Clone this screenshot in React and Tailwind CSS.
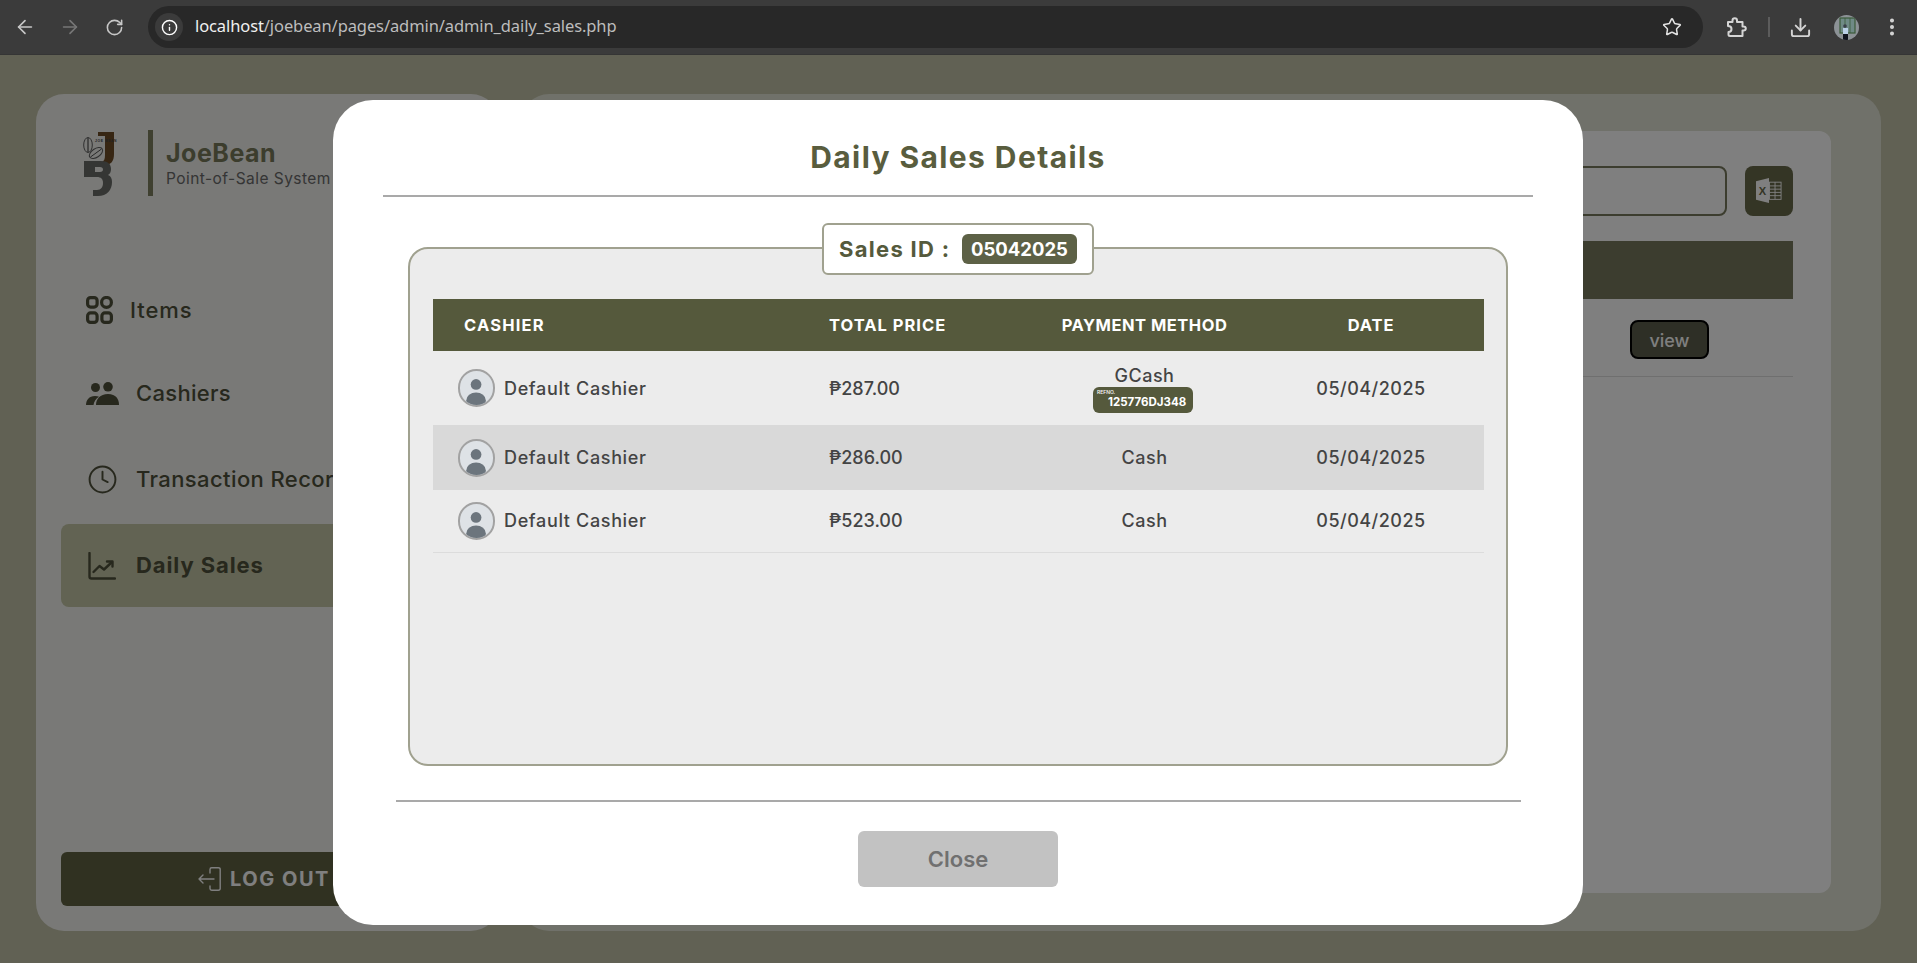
import { ArrowLeft, ArrowRight, RotateCw, Info, Star, Download, EllipsisVertical, Clock } from 'lucide-react';

const sales = [
  { id: 1, price: '₱287.00', method: 'GCash', ref: '125776DJ348', row: 'h-[74px]' },
  { id: 2, price: '₱286.00', method: 'Cash', row: 'h-[65px] bg-[#d9d9d9]' },
  { id: 3, price: '₱523.00', method: 'Cash', row: 'h-[62px] border-b border-[#dcdcdc]' },
];

function ItemsIcon() {
  return (
    <svg width="27" height="28" viewBox="0 0 27 28" fill="none" stroke="currentColor" strokeWidth="3.2">
      <rect x="1.6" y="1.6" width="9.5" height="9.5" rx="3" />
      <circle cx="20.5" cy="6.4" r="4.9" />
      <rect x="1.6" y="16.9" width="9.5" height="9.5" rx="3" />
      <rect x="15.9" y="16.9" width="9.5" height="9.5" rx="3" />
    </svg>
  );
}

function PeopleIcon() {
  return (
    <svg width="33" height="23" viewBox="0 0 33 23" fill="currentColor">
      <circle cx="9.5" cy="5.5" r="4.5" />
      <circle cx="22" cy="4.8" r="4.8" />
      <path d="M10 23c0-6 4-11 12-11s11 5 11 11z" />
      <path d="M0 23c0-5 3-9 9-9 1.6 0 3 .3 4 .8C10 16.500 8 19.500 7.500 23z" />
    </svg>
  );
}

function ChartIcon() {
  return (
    <svg width="28" height="28" viewBox="0 0 28 28" fill="none" stroke="currentColor" strokeWidth="2.4" strokeLinecap="round" strokeLinejoin="round">
      <path d="M1.500 1v23.500c0 1.200.8 2 2 2h23.500" />
      <path d="M5.500 20l6-6 4.500 3.500 8-7.500" />
      <path d="M19 9.500h5.500v5" />
    </svg>
  );
}

function LogoutIcon() {
  return (
    <svg width="23" height="24" viewBox="0 0 23 24" fill="none" stroke="currentColor" strokeWidth="1.4" strokeLinecap="round" strokeLinejoin="round">
      <path d="M12 6V2.500C12 1.500 12.700.8 13.700.8h6.600c1 0 1.900.7 1.900 1.700v19c0 1-.9 1.700-1.900 1.700h-6.600c-1 0-1.700-.7-1.700-1.700V19" />
      <path d="M16 12H1M5 8l-4 4 4 4" />
    </svg>
  );
}

function ExcelIcon() {
  return (
    <svg width="26" height="26" viewBox="0 0 28 28" className="text-white">
      <path d="M0 3.500L14 0v27L0 23.500z" fill="currentColor" />
      <text x="7" y="18" fontSize="12" fontWeight="700" textAnchor="middle" fill="#686a4a" fontFamily="Liberation Sans, sans-serif">X</text>
      <g fill="none" stroke="currentColor" strokeWidth="1">
        <rect x="14.500" y="4.500" width="12.500" height="18.500" />
        <path d="M14.500 8.500h12.500M14.500 12h12.500M14.500 15.500h12.500M14.500 19h12.500M20.500 4.500v18.500" />
      </g>
    </svg>
  );
}

function ExtensionIcon() {
  return (
    <svg width="22" height="21" viewBox="0 0 22 21" fill="none" stroke="currentColor" strokeWidth="2" strokeLinejoin="round" className="ml-[23px] text-[#d5d5d5]">
      <path d="M2 5h4.500V3.500c0-1.300 1-2.300 2.300-2.300s2.200 1 2.200 2.300V5h5.500v4.500h1c1.300 0 2.300.8 2.300 2s-1 2-2.300 2h-1V19H4c-1 0-1.500-.5-1.500-1.500V15c1.800 0 3-1 3-3s-1.500-3-3.500-3z" />
    </svg>
  );
}

function ProfilePhoto() {
  return (
    <svg width="25" height="25" viewBox="0 0 25 25" className="ml-[22px] shrink-0 rounded-full">
      <rect width="25" height="25" fill="#8c9296" />
      <rect x="6" y="3" width="15" height="15" fill="#6f8a86" stroke="#3b5a3a" strokeWidth="1.2" />
      <path d="M11 3v15M16 3v15" stroke="#3b5a3a" strokeWidth=".8" />
      <circle cx="11" cy="11" r="1.800" fill="#3a3f4a" />
      <rect x="9" y="13" width="5" height="6" fill="#b9cfe6" />
      <rect x="9" y="19" width="5" height="6" fill="#10141f" />
    </svg>
  );
}

function Logo() {
  return (
    <svg width="38" height="66" viewBox="0 0 38 66" className="shrink-0 mt-[2px]">
      <path d="M15 1h16v22c0 7-3 11-9 11l-3-3c2-1 3-3 3-7V5h-7z" fill="#6e4c26" />
      <ellipse cx="5" cy="14" rx="4.300" ry="7.500" fill="none" stroke="#606060" strokeWidth="1" />
      <path d="M5 7v14" stroke="#505050" strokeWidth="1.200" />
      <ellipse cx="13" cy="22" rx="7.500" ry="4.300" transform="rotate(-35 13 22)" fill="#f2f2ee" stroke="#606060" strokeWidth="1" />
      <path d="M7.500 26l11-8" stroke="#505050" strokeWidth="1" />
      <text x="12" y="10.500" fontSize="3.400" fontWeight="700" letterSpacing=".6" fill="#444444" fontFamily="Liberation Sans, sans-serif">JOE BEAN</text>
      <path d="M1 30h17c7 0 10 3 10 8 0 3-1 5-3 6 3 1 4 4 4 7 0 8-5 14-14 14h-5v-6h4c4 0 6-3 6-7s-2-6-6-6H1zm11 6v5h5c2 0 3-1 3-2.500S19 36 17 36z" fill="#6a6c68" />
    </svg>
  );
}

function Avatar() {
  return (
    <div className="w-[37px] h-[38px] rounded-full border-2 border-[#a2a2a2] bg-[#dee2e6] overflow-hidden shrink-0">
      <svg viewBox="0 0 37 38" className="w-full h-full" fill="#6c757d">
        <circle cx="18" cy="15" r="6" />
        <ellipse cx="18" cy="33" rx="11" ry="9" />
      </svg>
    </div>
  );
}

function ChromeBar() {
  return (
    <div className="h-[55px] shrink-0 bg-[#3b3b3b] border-b border-[#353535] flex items-center text-[#c7c7c7]">
      <div className="w-[148px] shrink-0 flex items-center pl-[14px] gap-[23px]">
        <ArrowLeft size={22} strokeWidth={1.8} />
        <ArrowRight size={22} strokeWidth={1.8} className="text-[#777777]" />
        <RotateCw size={19} strokeWidth={2} className="ml-[1px]" />
      </div>
      <div className="w-[1555px] h-[42px] rounded-full bg-[#282828] flex items-center pl-[7px] pr-[21px]">
        <div className="w-[28px] h-[28px] rounded-full bg-[#3b3b3b] flex items-center justify-center text-white">
          <Info size={17} />
        </div>
        <div className="ml-3 flex-1 text-[16.500px] tracking-[-0.1px] font-['Noto_Sans',sans-serif] text-[#bdbdbd] -mt-[2px]">
          <span className="text-[#f0f0f0]">localhost</span>/joebean/pages/admin/admin_daily_sales.php
        </div>
        <Star size={20} strokeWidth={1.8} className="text-[#e3e3e3]" />
      </div>
      <ExtensionIcon />
      <div className="w-[2px] h-5 bg-[#5c5c5c] ml-[20px]" />
      <Download size={23} strokeWidth={2} className="ml-[19px] text-[#d5d5d5]" />
      <ProfilePhoto />
      <EllipsisVertical size={22} strokeWidth={2.4} className="ml-[22px] text-[#d5d5d5]" />
    </div>
  );
}

function Sidebar() {
  return (
    <aside className="w-[463px] shrink-0 bg-[#f2f2ee] rounded-[28px] px-[25px] pt-[36px] pb-[25px] flex flex-col">
      <div className="flex items-center pl-[22px] h-[66px]">
        <Logo />
        <div className="w-[5px] h-[66px] bg-[#7e8060] ml-[27px]" />
        <div className="ml-[13px]">
          <div className="text-[25px] leading-[30px] font-bold tracking-[0.5px] text-[#787a5a]">JoeBean</div>
          <div className="text-[15.500px] leading-[20px] mt-[1px] tracking-[0.45px] text-[#6a6a6a] whitespace-nowrap">Point-of-Sale System</div>
        </div>
      </div>
      <nav className="mt-[72px] flex flex-col text-[#4e503a] text-[22px] font-medium">
        <a className="h-[84px] flex items-center pl-[25px] gap-[17px] tracking-[0.9px]"><ItemsIcon />Items</a>
        <a className="h-[82px] flex items-center pl-[25px] gap-[17px] tracking-[0.3px]"><PeopleIcon />Cashiers</a>
        <a className="h-[90px] flex items-center pl-[26px] gap-[18px] whitespace-nowrap tracking-[0.4px]"><Clock size={31} strokeWidth={1.5} />Transaction Records</a>
        <a className="h-[83px] flex items-center pl-[27px] gap-[20px] rounded-lg bg-[#c4c6a6] font-bold tracking-[0.9px]"><ChartIcon />Daily Sales</a>
      </nav>
      <button className="mt-auto h-[54px] pr-[7px] rounded-md bg-[#606242] text-white text-[20px] font-bold tracking-[1.500px] flex items-center justify-center gap-[9px]">
        <LogoutIcon />LOG OUT
      </button>
    </aside>
  );
}

function MainPanel() {
  return (
    <main className="flex-1 bg-[#e0e2d4] rounded-[28px] pl-[37px] pr-[50px] pt-[37px] pb-[38px] flex flex-col">
      <div className="flex-1 bg-white rounded-xl pl-[37px] pr-[38px] pt-[35px]">
        <div className="flex gap-[18px] h-[50px]">
          <div className="flex-1 border-2 border-[#787a5e] rounded-lg" />
          <button className="w-[48px] rounded-lg bg-[#686a4a] flex items-center justify-center"><ExcelIcon /></button>
        </div>
        <div className="mt-[25px] h-[58px] bg-[#787a5e]" />
        <div className="h-[78px] pt-[21px] pr-[84px] flex justify-end items-start border-b border-[#dedede]">
          <button className="w-[79px] h-[39px] rounded-lg bg-[#5c5e4c] border-2 border-[#000000] text-white text-[18px] font-medium pt-[1px]">view</button>
        </div>
      </div>
    </main>
  );
}

function SalesTable() {
  return (
    <table className="w-full table-fixed text-[18px] font-medium text-[#444444] tracking-[0.5px]">
      <colgroup>
        <col className="w-[380px]" />
        <col className="w-[218px]" />
        <col className="w-[227px]" />
        <col className="w-[226px]" />
      </colgroup>
      <thead>
        <tr className="h-[52px] bg-[#55593c] text-white text-[16.500px] font-bold">
          <th className="pl-[31px] pt-[1px] text-left font-bold tracking-[1.200px]">CASHIER</th>
          <th className="pl-4 pt-[1px] text-left font-bold tracking-[1px]">TOTAL PRICE</th>
          <th className="pt-[1px] font-bold tracking-[0.5px]">PAYMENT METHOD</th>
          <th className="pt-[1px] font-bold tracking-[0.9px]">DATE</th>
        </tr>
      </thead>
      <tbody>
        {sales.map((s) => (
          <tr key={s.id} className={s.row}>
            <td className="pl-[25px]">
              <div className="flex items-center gap-[9px] tracking-[0.65px]"><Avatar />Default Cashier</div>
            </td>
            <td className="pl-4 tracking-normal">{s.price}</td>
            <td className="text-center">
              <div className="leading-[22px] pt-[1px]">{s.method}</div>
              {s.ref && (
                <div className="relative ml-[62px] w-[100px] h-[26px] rounded-md bg-[#55593c] text-white text-[11.500px] tracking-normal font-bold pl-[15px] pt-[7px] leading-[16px] text-left">
                  <span className="absolute left-[4px] top-[1px] text-[5px] leading-[8px] font-medium">REFNO.</span>
                  {s.ref}
                </div>
              )}
            </td>
            <td className="text-center">05/04/2025</td>
          </tr>
        ))}
      </tbody>
    </table>
  );
}

function DetailsModal() {
  return (
    <div className="absolute inset-0 bg-black/50">
      <div className="w-[1250px] h-[825px] mt-[45px] ml-[333px] bg-white rounded-[40px] flex flex-col items-center">
        <h2 className="pt-[35px] h-[95px] text-[30px] leading-[44px] font-bold tracking-[1.400px] text-[#595d3e]">Daily Sales Details</h2>
        <div className="w-[1150px] h-[2px] bg-[#a9a9a9] shrink-0" />
        <div className="relative self-start ml-[75px] w-[1100px] h-[519px] mt-[50px] rounded-[20px] border-2 border-[#a0a18f] bg-[#ececec] px-[23px] pt-[50px]">
          <div className="absolute left-[412px] top-[-26px] w-[272px] h-[52px] rounded-md border-2 border-[#a0a18f] bg-white flex items-center pl-[15px] text-[22px] font-bold tracking-[1.300px] text-[#555a3c]">
            Sales ID :
            <span className="ml-auto mr-[15px] w-[115px] h-[30px] rounded-md bg-[#5d6146] text-white text-[18.500px] tracking-normal leading-[30px] text-center">05042025</span>
          </div>
          <SalesTable />
        </div>
        <div className="w-[1125px] h-[2px] bg-[#a9a9a9] mt-[34px] shrink-0" />
        <button className="w-[200px] h-[56px] mt-[29px] pt-[1px] rounded-md bg-[#c2c2c2] text-[#707070] text-[22px] font-semibold">Close</button>
      </div>
    </div>
  );
}

export default function App() {
  return (
    <div className="h-screen flex flex-col overflow-hidden font-['Inter',sans-serif]">
      <ChromeBar />
      <div className="relative flex-1 min-h-0 bg-[#c2c2a8] pl-[36px] pr-[36px] pt-[39px] pb-[32px] flex gap-[22px]">
        <Sidebar />
        <MainPanel />
        <DetailsModal />
      </div>
    </div>
  );
}
